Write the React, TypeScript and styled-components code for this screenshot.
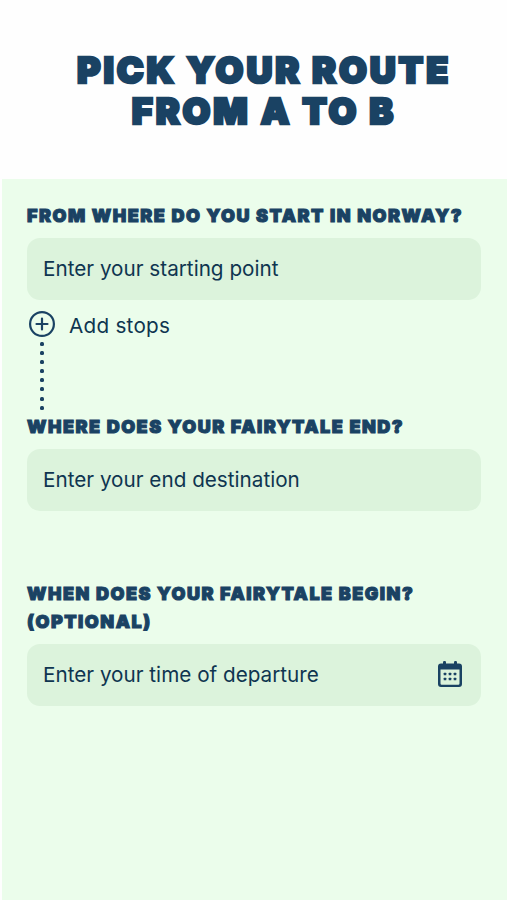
import React from "react";
import styled, { createGlobalStyle } from "styled-components";

const Global = createGlobalStyle`
  html, body { margin: 0; padding: 0; background: #fefefe; }
  body { font-family: "Inter", "Liberation Sans", sans-serif; }
`;
const Page = styled.div`
  width: 507px; height: 900px; display: flex; flex-direction: column; overflow: hidden;
`;
const Header = styled.header`
  height: 179px; box-sizing: border-box; padding: 50px 0 0 21px; display: flex; justify-content: center;
`;
const Title = styled.h1`
  margin: 0; font-family: "Inter", "Lato", sans-serif; font-weight: 900; font-size: 36px; line-height: 41px;
  letter-spacing: 2.85px; text-align: center; text-transform: uppercase; color: #1a4263;
  -webkit-text-stroke: 2.6px #1a4263; white-space: nowrap;
`;
const Panel = styled.main`
  flex: 1; margin-left: 2px; padding: 23px 26px 0 25px; background: #ebfdeb; display: flex; flex-direction: column;
`;
const Label = styled.label`
  display: block; font-family: "Inter", "Lato", sans-serif; font-weight: 900; font-size: 18px; line-height: 28px;
  letter-spacing: 1.5px; text-transform: uppercase; color: #1a4263; -webkit-text-stroke: 1.1px #1a4263; white-space: nowrap;
`;
const Field = styled.div`
  box-sizing: border-box; height: 62px; margin-top: 8px; padding: 0 18px 2px 16px; border-radius: 13px; background: #dcf3dc;
  display: flex; align-items: center; justify-content: space-between;
  font-size: 20.7px; color: #0f3550;
`;
const AddRow = styled.div`
  display: flex; align-items: center; gap: 14px; margin-top: 10px; height: 30px; padding-left: 2px;
  font-size: 20.7px; letter-spacing: 0.25px; color: #0f3550;
`;
const PlusIcon = styled.svg`
  margin-bottom: 3px;
`;
const Dots = styled.div`
  width: 4px; height: 72px; box-sizing: border-box; margin: 0 0 1px 13px; padding-top: 2px;
  display: flex; flex-direction: column; gap: 5.1px;
`;
const Dot = styled.span`
  width: 4px; height: 4px; flex: none; border-radius: 1.5px; background: #1a4263;
`;
const Spacer = styled.div`height: 69px;`;

export default function App() {
  return (
    <Page>
      <Global />
      <Header><Title>Pick your route<br />from A to B</Title></Header>
      <Panel>
        <Label>From where do you start in Norway?</Label>
        <Field>Enter your starting point</Field>
        <AddRow>
          <PlusIcon width="26" height="26" viewBox="0 0 26 26" fill="none" stroke="#1a4263" strokeWidth="2.2" strokeLinecap="round">
            <circle cx="13" cy="13" r="11.9" />
            <path d="M13 7.500v11M7.500 13h11" />
          </PlusIcon>
          Add stops
        </AddRow>
        <Dots>
          {Array.from({ length: 8 }, (_, i) => <Dot key={i} />)}
        </Dots>
        <Label>Where does your fairytale end?</Label>
        <Field>Enter your end destination</Field>
        <Spacer />
        <Label>When does your fairytale begin?<br />(optional)</Label>
        <Field>
          Enter your time of departure
          <svg width="26" height="28" viewBox="0 0 26 28" fill="#1a4263" aria-hidden="true">
            <rect x="6" y="1" width="3" height="5" rx="1.2" />
            <rect x="17" y="1" width="3" height="5" rx="1.2" />
            <path fillRule="evenodd" d="M4 3.5h18a3 3 0 0 1 3 3V24a3 3 0 0 1-3 3H4a3 3 0 0 1-3-3V6.500a3 3 0 0 1 3-3zM3.500 9.500V23.500a1.200 1.200 0 0 0 1.200 1.200h16.600a1.200 1.200 0 0 0 1.200-1.200V9.500z" />
            {[8, 13, 18].flatMap((x) => [14, 19].map((y) => <rect key={`${x}-${y}`} x={x - 1.3} y={y - 1.3} width="2.600" height="2.600" rx="0.5" />))}
          </svg>
        </Field>
      </Panel>
    </Page>
  );
}
